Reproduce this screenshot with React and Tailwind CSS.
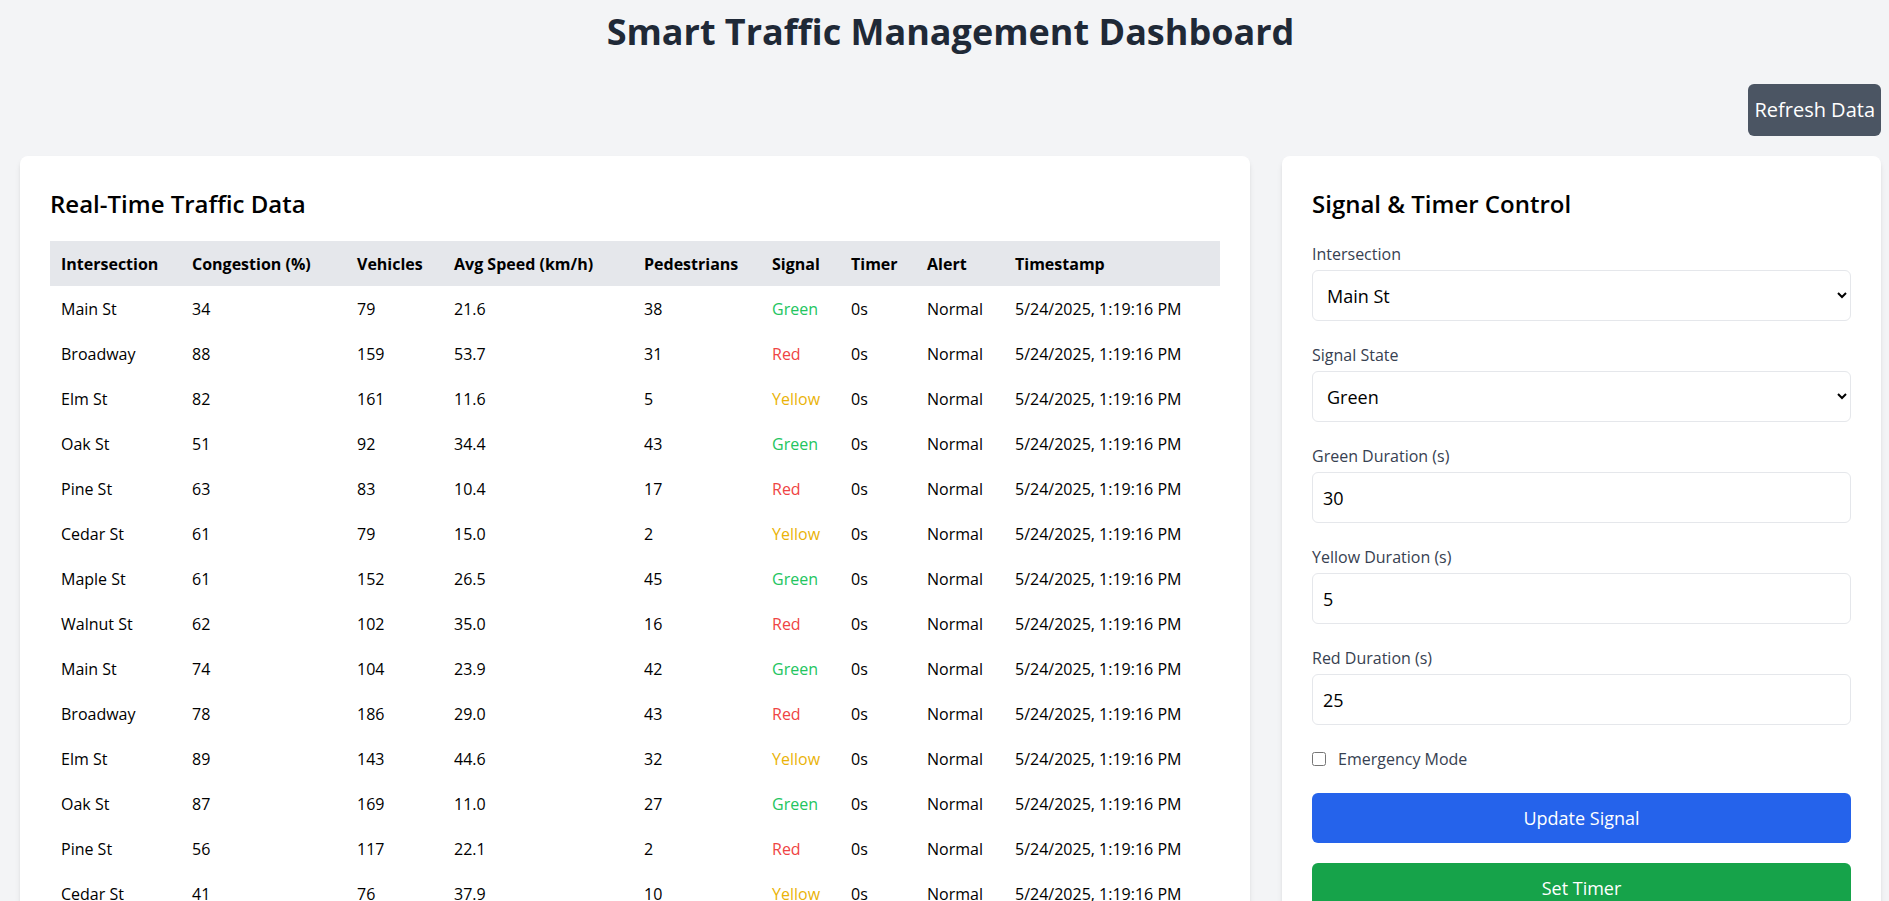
import { useState } from 'react';

const rows = [
  ['Main St', 34, 79, '21.6', 38, 'Green'],
  ['Broadway', 88, 159, '53.7', 31, 'Red'],
  ['Elm St', 82, 161, '11.6', 5, 'Yellow'],
  ['Oak St', 51, 92, '34.4', 43, 'Green'],
  ['Pine St', 63, 83, '10.4', 17, 'Red'],
  ['Cedar St', 61, 79, '15.0', 2, 'Yellow'],
  ['Maple St', 61, 152, '26.5', 45, 'Green'],
  ['Walnut St', 62, 102, '35.0', 16, 'Red'],
  ['Main St', 74, 104, '23.9', 42, 'Green'],
  ['Broadway', 78, 186, '29.0', 43, 'Red'],
  ['Elm St', 89, 143, '44.6', 32, 'Yellow'],
  ['Oak St', 87, 169, '11.0', 27, 'Green'],
  ['Pine St', 56, 117, '22.1', 2, 'Red'],
  ['Cedar St', 41, 76, '37.9', 10, 'Yellow'],
  ['Maple St', 58, 131, '19.2', 21, 'Green'],
  ['Walnut St', 47, 98, '31.4', 9, 'Red'],
];

const signalColor = {
  Green: 'text-[#22c55e]',
  Red: 'text-[#ef4444]',
  Yellow: 'text-[#eab308]',
};

const intersections = ['Main St', 'Broadway', 'Elm St', 'Oak St', 'Pine St', 'Cedar St', 'Maple St', 'Walnut St'];

function Field({ label, children }) {
  return (
    <div className="mb-[22px]">
      <label className="block mb-1 text-base font-medium text-[#374151]">{label}</label>
      {children}
    </div>
  );
}

export default function App() {
  const [intersection, setIntersection] = useState('Main St');
  const [signal, setSignal] = useState('Green');
  const [green, setGreen] = useState(30);
  const [yellow, setYellow] = useState(5);
  const [red, setRed] = useState(25);
  const [emergency, setEmergency] = useState(false);

  const inputCls = 'w-full h-[51px] border border-[#e5e7eb] rounded-md px-2.5 text-lg bg-white text-black';

  return (
    <div className="min-h-screen bg-[#f3f4f6] pl-5 pr-2 pt-3 pb-8 font-['Open_Sans',sans-serif]">
      <h1 className="text-4xl font-bold text-center text-[#1f2937] mb-8">Smart Traffic Management Dashboard</h1>

      <div className="flex justify-end mb-5">
        <button className="bg-[#4b5563] text-white text-xl px-1.5 py-3 rounded-md">Refresh Data</button>
      </div>

      <div className="grid grid-cols-3 gap-8 items-start">
        <div className="col-span-2 bg-white rounded-lg shadow-md px-[30px] pt-8 pb-8">
          <h2 className="text-2xl font-semibold text-black mb-[21px]">Real-Time Traffic Data</h2>
          <table className="w-full table-fixed border-collapse text-base text-black">
            <colgroup>
              <col className="w-[131px]" />
              <col className="w-[165px]" />
              <col className="w-[97px]" />
              <col className="w-[190px]" />
              <col className="w-[128px]" />
              <col className="w-[79px]" />
              <col className="w-[76px]" />
              <col className="w-[88px]" />
              <col />
            </colgroup>
            <thead>
              <tr className="bg-[#e5e7eb]">
                {['Intersection', 'Congestion (%)', 'Vehicles', 'Avg Speed (km/h)', 'Pedestrians', 'Signal', 'Timer', 'Alert', 'Timestamp'].map((h) => (
                  <th key={h} className="text-left font-bold px-[11px] py-[10.5px] whitespace-nowrap">{h}</th>
                ))}
              </tr>
            </thead>
            <tbody>
              {rows.map((r, i) => (
                <tr key={i}>
                  <td className="px-[11px] py-[10.5px] whitespace-nowrap">{r[0]}</td>
                  <td className="px-[11px] py-[10.5px]">{r[1]}</td>
                  <td className="px-[11px] py-[10.5px]">{r[2]}</td>
                  <td className="px-[11px] py-[10.5px]">{r[3]}</td>
                  <td className="px-[11px] py-[10.5px]">{r[4]}</td>
                  <td className={`px-[11px] py-[10.5px] ${signalColor[r[5]]}`}>{r[5]}</td>
                  <td className="px-[11px] py-[10.5px]">0s</td>
                  <td className="px-[11px] py-[10.5px]">Normal</td>
                  <td className="px-[11px] py-[10.5px] whitespace-nowrap">5/24/2025, 1:19:16 PM</td>
                </tr>
              ))}
            </tbody>
          </table>
        </div>

        <div className="bg-white rounded-lg shadow-md px-[30px] pt-8 pb-8">
          <h2 className="text-2xl font-semibold text-black mb-[22px]">Signal &amp; Timer Control</h2>

          <Field label="Intersection">
            <select className={inputCls} value={intersection} onChange={(e) => setIntersection(e.target.value)}>
              {intersections.map((n) => (
                <option key={n}>{n}</option>
              ))}
            </select>
          </Field>

          <Field label="Signal State">
            <select className={inputCls} value={signal} onChange={(e) => setSignal(e.target.value)}>
              <option>Green</option>
              <option>Yellow</option>
              <option>Red</option>
            </select>
          </Field>

          <Field label="Green Duration (s)">
            <input type="number" className={inputCls} value={green} onChange={(e) => setGreen(e.target.value)} />
          </Field>

          <Field label="Yellow Duration (s)">
            <input type="number" className={inputCls} value={yellow} onChange={(e) => setYellow(e.target.value)} />
          </Field>

          <Field label="Red Duration (s)">
            <input type="number" className={inputCls} value={red} onChange={(e) => setRed(e.target.value)} />
          </Field>

          <label className="flex items-center gap-3 mb-[22px] mt-[2px] text-base font-medium text-[#374151]">
            <input
              type="checkbox"
              className="w-3.5 h-3.5"
              checked={emergency}
              onChange={(e) => setEmergency(e.target.checked)}
            />
            Emergency Mode
          </label>

          <button className="w-full bg-[#2563eb] text-white text-lg py-[11px] rounded-md mb-5">Update Signal</button>
          <button className="w-full bg-[#16a34a] text-white text-lg py-[11px] rounded-md">Set Timer</button>
        </div>
      </div>
    </div>
  );
}
